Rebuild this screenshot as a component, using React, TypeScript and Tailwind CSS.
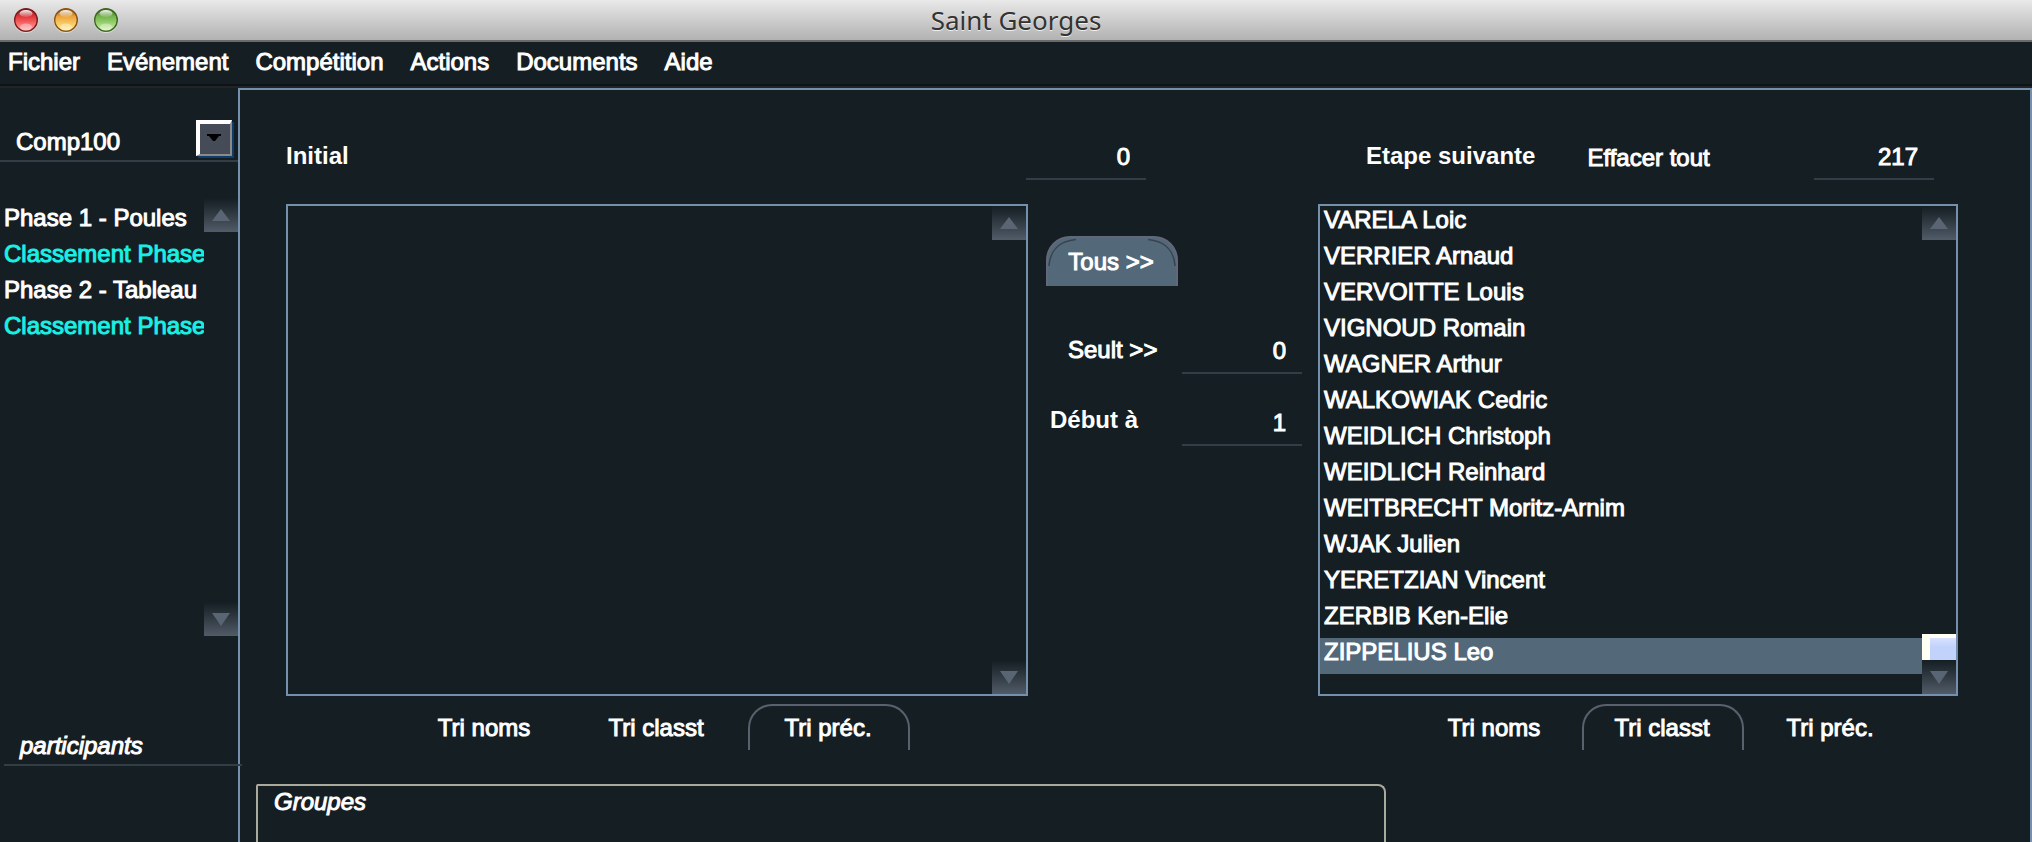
import React from "react";

const MENUS = ["Fichier", "Evénement", "Compétition", "Actions", "Documents", "Aide"];

const PHASES = [
  { label: "Phase 1 - Poules", ranking: false },
  { label: "Classement Phase 1", ranking: true },
  { label: "Phase 2 - Tableau", ranking: false },
  { label: "Classement Phase 2", ranking: true },
];

const FENCERS = [
  "VARELA Loic",
  "VERRIER Arnaud",
  "VERVOITTE Louis",
  "VIGNOUD Romain",
  "WAGNER Arthur",
  "WALKOWIAK Cedric",
  "WEIDLICH Christoph",
  "WEIDLICH Reinhard",
  "WEITBRECHT Moritz-Arnim",
  "WJAK Julien",
  "YERETZIAN Vincent",
  "ZERBIB Ken-Elie",
  "ZIPPELIUS Leo",
];

const SORTS = ["Tri noms", "Tri classt", "Tri préc."];

function Light({ id, name, rim, top, mid, low }: { id: string; name: string; rim: string; top: string; mid: string; low: string }) {
  return (
    <button type="button" aria-label={name} className="size-6">
      <svg viewBox="0 0 24 24" className="size-6 overflow-visible">
        <defs>
          <linearGradient id={id} x1="0" y1="0" x2="0" y2="1">
            <stop offset="0" stopColor={rim} />
            <stop offset="0.35" stopColor={top} />
            <stop offset="0.6" stopColor={mid} />
            <stop offset="1" stopColor={low} />
          </linearGradient>
          <linearGradient id={`${id}-gloss`} x1="0" y1="0" x2="0" y2="1">
            <stop offset="0" stopColor="#fff" stopOpacity="0.95" />
            <stop offset="1" stopColor="#fff" stopOpacity="0.1" />
          </linearGradient>
        </defs>
        <circle cx="12" cy="13" r="12" fill="#fff" opacity="0.5" />
        <circle cx="12" cy="12" r="11.3" fill={`url(#${id})`} stroke={rim} strokeWidth="1.4" />
        <ellipse cx="12" cy="5.5" rx="6.5" ry="3.6" fill={`url(#${id}-gloss)`} />
        <ellipse cx="12" cy="19" rx="6" ry="3.5" fill="#fff" opacity="0.35" />
      </svg>
    </button>
  );
}

function Arrow({ up = false }: { up?: boolean }) {
  return (
    <button
      type="button"
      aria-label={up ? "Monter" : "Descendre"}
      className="flex h-[34px] w-[34px] shrink-0 items-center justify-center bg-linear-to-b from-[#151e23] to-[#525c69]"
    >
      <svg viewBox="0 0 18 14" className="h-3.5 w-[18px]">
        <path d={up ? "M9 1L18 13H0Z" : "M0 1H18L9 14Z"} fill="#5a6573" />
      </svg>
    </button>
  );
}

function Count({ id, label, value }: { id: string; label: string; value: string }) {
  return (
    <input
      id={id}
      aria-label={label}
      defaultValue={value}
      className="h-10 w-[120px] border-b-2 border-[#323d46] bg-transparent pr-4 pb-1 text-right outline-none"
    />
  );
}

function Tabs({ active, className }: { active: string; className: string }) {
  return (
    <div className={`flex ${className}`}>
      {SORTS.map((s) => (
        <button
          key={s}
          type="button"
          className={`h-[46px] w-[162px] rounded-t-[24px] border-x-2 border-t-2 pr-0.5 ${s === active ? "border-[#5a606e]" : "border-transparent"}`}
        >
          {s}
        </button>
      ))}
    </div>
  );
}

export default function App() {
  return (
    <div className="flex min-h-screen flex-col bg-[#151e23] font-['Liberation_Sans',Arial,sans-serif] text-[24px] leading-7 text-white">
      <header className="grid h-[42px] grid-cols-[1fr_auto_1fr] items-center border-b-2 border-[#6a6a6a] bg-linear-to-b from-[#e9e9e9] to-[#b2b2b2] px-3.5">
        <div className="flex gap-4">
          <Light id="close" name="Fermer" rim="#7d1a1c" top="#e2383c" mid="#f4605f" low="#ffb4b0" />
          <Light id="min" name="Réduire" rim="#8a5312" top="#eda43c" mid="#f6c35c" low="#fff3a0" />
          <Light id="zoom" name="Agrandir" rim="#3c6622" top="#74b54c" mid="#93cd6c" low="#dcf7b4" />
        </div>
        <h1 className="font-['Noto_Sans',sans-serif] text-[26px] text-[#333333] [text-shadow:0_1px_0_#eeeeee]">Saint Georges</h1>
      </header>

      <div className="flex flex-1 flex-col [-webkit-text-stroke:1px]">
        <nav className="flex h-[42px] gap-[27px] pt-1.5 pl-2">
          {MENUS.map((m) => (
            <button key={m} type="button" className="h-7">
              {m}
            </button>
          ))}
        </nav>
        <div className="h-1 border-t-2 border-b-2 border-t-[#0d1316] border-b-[#222527]" />

        <div className="flex flex-1">
          <aside className="flex w-[238px] shrink-0 flex-col pt-8">
            <div className="grid items-center border-b-2 border-[#323d46] pb-1">
              <select
                aria-label="Compétition"
                className="col-start-1 row-start-1 h-9 w-full appearance-none bg-transparent pt-2 pl-4 outline-none"
              >
                <option>Comp100</option>
              </select>
              <span className="pointer-events-none col-start-1 row-start-1 mr-1.5 flex size-9 items-start justify-center justify-self-end border-t-4 border-r-2 border-b-2 border-l-4 border-t-white border-r-[#8a8a8a] border-b-[#8a8a8a] border-l-white bg-[#454c58] pt-2.5 pr-0.5 shadow-[2px_2px_0_#0f3d6b]">
                <svg viewBox="0 0 14 8" className="h-2 w-3.5">
                  <path d="M0 0H14V2H12L8 7H6L2 2H0Z" fill="#000" />
                </svg>
              </span>
            </div>

            <div className="mt-9 flex h-[438px] items-stretch">
              <ul className="min-w-0 flex-1 overflow-hidden pt-1.5 pl-1">
                {PHASES.map((p) => (
                  <li key={p.label} className="h-9">
                    <button type="button" className={`whitespace-nowrap ${p.ranking ? "text-[#19f0e6]" : "text-white"}`}>
                      {p.label}
                    </button>
                  </li>
                ))}
              </ul>
              <div className="flex flex-col justify-between">
                <Arrow up />
                <Arrow />
              </div>
            </div>

            <p className="relative z-10 mt-24 -mr-1 ml-1 border-b-2 border-[#323d46] pb-1 pl-4 italic">participants</p>
          </aside>

          <main className="flex min-w-0 flex-1 flex-col border-x-2 border-t-2 border-[#7490ad]">
            <div className="grid grid-cols-[742fr_290px_640fr] pt-[50px] pr-[72px] pl-[46px]">
              <div className="col-span-2 flex h-16 items-start justify-between pr-[172px]">
                <h2 className="pt-0.5 font-bold [-webkit-text-stroke:0]">Initial</h2>
                <Count id="initial" label="Initial" value="0" />
              </div>
              <div className="flex h-16 items-start pr-6 pl-12">
                <h2 className="pt-0.5 font-bold [-webkit-text-stroke:0]">Etape suivante</h2>
                <button type="button" className="ml-13 pt-1">
                  Effacer tout
                </button>
                <span className="flex-1" />
                <Count id="suivante" label="Etape suivante" value="217" />
              </div>

              <div className="flex flex-col items-end justify-between border-2 border-[#7490ad]">
                <Arrow up />
                <Arrow />
              </div>

              <div className="pt-8 pr-4 pl-[18px]">
                <button
                  type="button"
                  className="relative h-[50px] w-[132px] rounded-t-[24px] border-x-2 border-t-2 border-[#62687a] bg-[#536878] pr-0.5"
                >
                  <svg viewBox="0 0 128 48" className="absolute inset-0 size-full" fill="none" stroke="#38434f" strokeWidth="1.5">
                    <path d="M1 28C2 12 12 3 28 1.5M127 28C126 12 116 3 100 1.5" />
                  </svg>
                  <span className="relative">Tous &gt;&gt;</span>
                </button>
                <div className="mt-12 flex items-start justify-between">
                  <button type="button" className="pt-0.5 pl-[22px]">
                    Seult &gt;&gt;
                  </button>
                  <Count id="seult" label="Seult" value="0" />
                </div>
                <div className="mt-8 flex items-start justify-between">
                  <label htmlFor="debut" className="pl-1 font-bold [-webkit-text-stroke:0]">
                    Début à
                  </label>
                  <Count id="debut" label="Début à" value="1" />
                </div>
              </div>

              <div className="flex border-2 border-[#7490ad]">
                <ul className="min-w-0 flex-1 pb-5">
                  {FENCERS.map((name, i) => (
                    <li key={name} className={`h-9 truncate pl-1 ${i === 12 ? "bg-[#536878]" : ""}`}>
                      {name}
                    </li>
                  ))}
                </ul>
                <div className="flex flex-col">
                  <Arrow up />
                  <span className="flex-1" />
                  <span className="h-[26px] border-t-4 border-l-8 border-t-[#fffff4] border-l-[#fffff4] bg-linear-to-b from-[#d9e2ff] to-[#c2d3fb] to-40%" />
                  <Arrow />
                </div>
              </div>

              <Tabs active="Tri préc." className="col-span-2 gap-2.5 pt-2 pl-[118px]" />
              <Tabs active="Tri classt" className="gap-1.5 pt-2 pl-24" />
            </div>

            <section className="mt-[34px] mr-[644px] ml-4 flex-1 rounded-tl-xs rounded-tr-lg border-x-2 border-t-2 border-[#a9aa9c] pt-0.5 pb-6 pl-4 italic">
              <h2>Groupes</h2>
            </section>
          </main>
        </div>
      </div>
    </div>
  );
}
